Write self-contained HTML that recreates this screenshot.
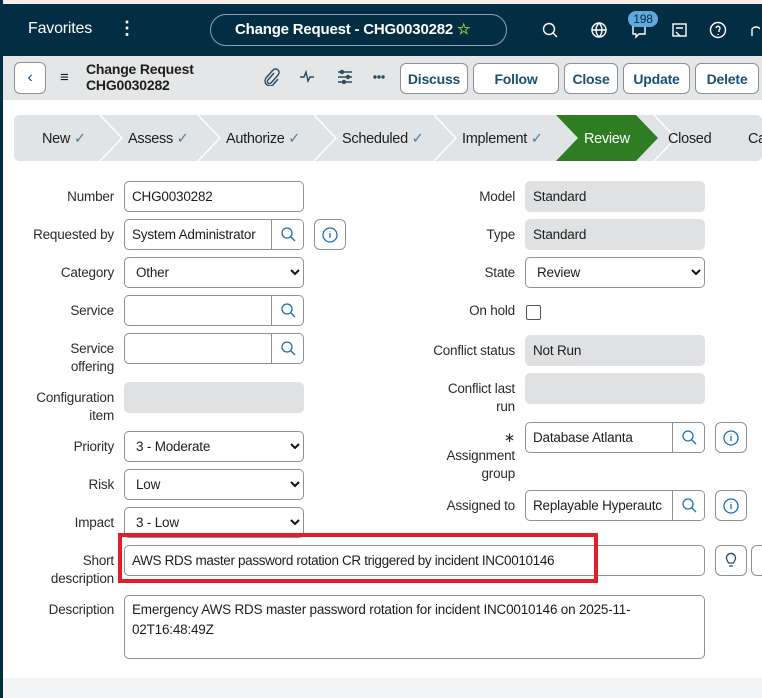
<!DOCTYPE html>
<html><head><meta charset="utf-8"><style>
*{box-sizing:border-box;margin:0;padding:0}
body{width:762px;height:698px;overflow:hidden;background:#fff;font-family:"Liberation Sans",sans-serif;font-size:13.5px;letter-spacing:-0.2px;color:#1d1d1d;position:relative}
.a{position:absolute}
.hdr{left:0;top:0;width:762px;height:56px;background:#032d42;border-top:4px solid #f3eee6}
.lb{left:0;top:0;width:3px;height:698px;background:#032d42}
.tb{left:3px;top:56px;width:759px;height:44px;background:#e4e6e7}
.btn{position:absolute;top:63px;height:31px;border:1px solid #8a9094;border-radius:6px;background:#fff;color:#1b4f72;font-weight:bold;font-size:14px;display:flex;align-items:center;justify-content:center}
.lab{position:absolute;text-align:right;line-height:18px;color:#2b2b2b}
.in{position:absolute;height:31px;border:1px solid #8b9196;border-radius:5px;background:#fff;padding-left:7px;line-height:29px;white-space:nowrap;overflow:hidden}
.ro{background:#dfe1e3;border-color:#dfe1e3}
.sq{position:absolute;width:32px;height:31px;border-left:1px solid #8b9196;right:0;top:-1px}
.ib{position:absolute;width:32px;height:31px;border:1px solid #8b9196;border-radius:6px;background:#fff}
</style></head><body>
<div class="a hdr"></div><div class="a lb"></div>
<div class="a" style="left:28px;top:20px;color:#fff;font-size:16px">Favorites</div>
<div class="a" style="left:118px;top:18px;color:#fff;font-size:18px;font-weight:bold">⋮</div>
<div class="a" style="left:210px;top:14px;width:297px;height:32px;border:1px solid #8fa3ad;border-radius:16px;color:#fff;font-weight:bold;font-size:15px;line-height:30px;padding-left:24px">Change Request - CHG0030282 <span style="color:#7fc341">☆</span></div>
<svg class="a" style="left:540px;top:20px" width="220" height="22" fill="none" stroke="#fff" stroke-width="1.4">
<circle cx="9" cy="9" r="5.5"/><path d="M13 13l4 4"/>
<circle cx="59" cy="10" r="7"/><path d="M52 10h14M59 3c-4 4-4 10 0 14M59 3c4 4 4 10 0 14"/>
<path d="M93 5h12v9h-6l-3 3v-3h-3z"/>
<rect x="133" y="4" width="13" height="12"/><path d="M136 8h7M136 12l4 4"/>
<circle cx="178" cy="10" r="7.5"/><path d="M176 8a2 2 0 1 1 3 2v2M178 14v1"/>
<path d="M212 16v-7a5 5 0 0 1 8 0"/></svg>
<div class="a" style="left:628px;top:11px;width:30px;height:16px;border-radius:8px;background:#5fa8e0;color:#032d42;font-size:12px;text-align:center;line-height:16px">198</div>
<div class="a tb"></div>
<div class="a" style="left:14px;top:62px;width:32px;height:32px;border:1px solid #8a9094;border-radius:6px;background:#fff;color:#1b4f72;text-align:center;line-height:30px;font-size:16px">‹</div>
<div class="a" style="left:60px;top:69px;font-size:15px">≡</div>
<div class="a" style="left:86px;top:61px;font-size:14px;font-weight:bold;line-height:16px;color:#1d1d1d">Change Request<br>CHG0030282</div>
<svg class="a" style="left:262px;top:68px" width="126" height="18" fill="none" stroke="#2b4a5e" stroke-width="1.4"><path d="M12 5l-6 7a2 2 0 0 0 3 3l7-8a3.5 3.5 0 0 0-5-5l-7 8a5 5 0 0 0 7 7l5-6"/><g transform="translate(36 0)"><path d="M2 9h4l2-5 2 9 2-4h4"/><path d="M40 4h14M40 9h14M40 14h14"/><circle cx="44" cy="4" r="1.5"/><circle cx="50" cy="9" r="1.5"/><circle cx="46" cy="14" r="1.5"/><circle cx="77" cy="9" r="1" fill="#2b4a5e"/><circle cx="81" cy="9" r="1" fill="#2b4a5e"/><circle cx="85" cy="9" r="1" fill="#2b4a5e"/></g></svg>
<div class="btn" style="left:400px;width:68px">Discuss</div>
<div class="btn" style="left:473px;width:86px">Follow</div>
<div class="btn" style="left:564px;width:54px">Close</div>
<div class="btn" style="left:623px;width:67px">Update</div>
<div class="btn" style="left:695px;width:64px">Delete</div>
<svg class="a" style="left:14px;top:115px" width="748" height="46">
<rect width="748" height="46" rx="5" fill="#e1e4e6"/>
<g fill="none" stroke="#fff" stroke-width="1.5"><path d="M86 0l22 23-22 23M184 0l22 23-22 23M300 0l22 23-22 23M420 0l22 23-22 23M640 0l22 23-22 23"/></g>
<path d="M542 0h80l22 23-22 23h-80l22-23z" fill="#2e7d23"/>
<g font-family="Liberation Sans" font-size="14.5" fill="#1d1d1d" letter-spacing="-0.3">
<text x="28" y="28">New <tspan fill="#4a7fa0">✓</tspan></text><text x="114" y="28">Assess <tspan fill="#4a7fa0">✓</tspan></text><text x="212" y="28">Authorize <tspan fill="#4a7fa0">✓</tspan></text><text x="328" y="28">Scheduled <tspan fill="#4a7fa0">✓</tspan></text><text x="448" y="28">Implement <tspan fill="#4a7fa0">✓</tspan></text><text x="570" y="28" fill="#fff">Review</text><text x="654" y="28">Closed</text><text x="734" y="28">Ca</text></g></svg>

<div class="lab" style="right:648px;top:188px">Number</div>
<div class="in" style="left:124px;top:181px;width:180px">CHG0030282</div>
<div class="lab" style="right:648px;top:226px">Requested by</div>
<div class="in" style="left:124px;top:219px;width:180px">System Administrator<div class="sq" style="background:#fff"></div></div>
<div class="ib" style="left:314px;top:219px"></div>
<div class="lab" style="right:648px;top:264px">Category</div>
<div class="in" style="left:124px;top:257px;width:180px;padding-left:11px">Other</div>
<div class="lab" style="right:648px;top:302px">Service</div>
<div class="in" style="left:124px;top:295px;width:180px"><div class="sq"></div></div>
<div class="lab" style="right:648px;top:340px">Service<br>offering</div>
<div class="in" style="left:124px;top:333px;width:180px"><div class="sq"></div></div>
<div class="lab" style="right:648px;top:389px">Configuration<br>item</div>
<div class="in ro" style="left:124px;top:382px;width:180px"></div>
<div class="lab" style="right:648px;top:438px">Priority</div>
<div class="in" style="left:124px;top:431px;width:180px;padding-left:11px">3 - Moderate</div>
<div class="lab" style="right:648px;top:476px">Risk</div>
<div class="in" style="left:124px;top:469px;width:180px;padding-left:11px">Low</div>
<div class="lab" style="right:648px;top:514px">Impact</div>
<div class="in" style="left:124px;top:507px;width:180px;padding-left:11px">3 - Low</div>
<div class="lab" style="right:648px;top:552px">Short<br>description</div>
<div class="in" style="left:124px;top:545px;width:581px;letter-spacing:-0.35px">AWS RDS master password rotation CR triggered by incident INC0010146</div>
<div class="ib" style="left:715px;top:545px"></div>
<div class="ib" style="left:751px;top:545px"></div>
<div class="a" style="left:118px;top:533px;width:480px;height:50px;border:4px solid #e41e26"></div>
<div class="lab" style="right:648px;top:601px">Description</div>
<div class="in" style="left:124px;top:595px;width:581px;height:64px;line-height:20px;padding-top:4px;white-space:normal">Emergency AWS RDS master password rotation for incident INC0010146 on 2025-11-02T16:48:49Z</div>

<div class="lab" style="right:247px;top:188px">Model</div>
<div class="in ro" style="left:525px;top:181px;width:180px">Standard</div>
<div class="lab" style="right:247px;top:226px">Type</div>
<div class="in ro" style="left:525px;top:219px;width:180px">Standard</div>
<div class="lab" style="right:247px;top:264px">State</div>
<div class="in" style="left:525px;top:257px;width:180px;padding-left:11px">Review</div>
<div class="lab" style="right:247px;top:302px">On hold</div>
<div class="a" style="left:526px;top:305px;width:15px;height:15px;border:1px solid #555;border-radius:2px"></div>
<div class="lab" style="right:247px;top:342px">Conflict status</div>
<div class="in ro" style="left:525px;top:335px;width:180px">Not Run</div>
<div class="lab" style="right:247px;top:380px">Conflict last<br>run</div>
<div class="in ro" style="left:525px;top:373px;width:180px"></div>
<div class="lab" style="right:247px;top:429px">∗<br>Assignment<br>group</div>
<div class="in" style="left:525px;top:422px;width:180px">Database Atlanta<div class="sq"></div></div>
<div class="ib" style="left:715px;top:422px"></div>
<div class="lab" style="right:247px;top:497px">Assigned to</div>
<div class="in" style="left:525px;top:490px;width:180px">Replayable Hyperautc<div class="sq" style="background:#fff"></div></div>
<div class="ib" style="left:715px;top:490px"></div>
<div class="a" style="left:3px;top:678px;width:759px;height:20px;background:#f3f4f6"></div>
<svg class="a" style="left:0;top:0" width="762" height="698" fill="none" stroke="#1b6fb0" stroke-width="1.3">
<circle cx="287" cy="233" r="5"/><path d="M291 237l4 4"/>
<circle cx="287" cy="309" r="5"/><path d="M291 313l4 4"/>
<circle cx="287" cy="347" r="5"/><path d="M291 351l4 4"/>
<circle cx="688" cy="436" r="5"/><path d="M692 440l4 4"/>
<circle cx="688" cy="504" r="5"/><path d="M692 508l4 4"/>
<circle cx="330" cy="235" r="7"/><path d="M330 233v5M330 231v0.5"/>
<circle cx="731" cy="438" r="7"/><path d="M731 436v5M731 434v0.5"/>
<circle cx="731" cy="506" r="7"/><path d="M731 504v5M731 502v0.5"/>
<path d="M727 560a4.5 4.5 0 1 1 8 0l-1.5 3h-5zM729 566h4" stroke="#2b4a5e"/>
<path d="M291 270l4 4 4-4M692 270l4 4 4-4M291 444l4 4 4-4M291 482l4 4 4-4M291 520l4 4 4-4" stroke="#111" stroke-width="2"/>
</svg>
</body></html>
